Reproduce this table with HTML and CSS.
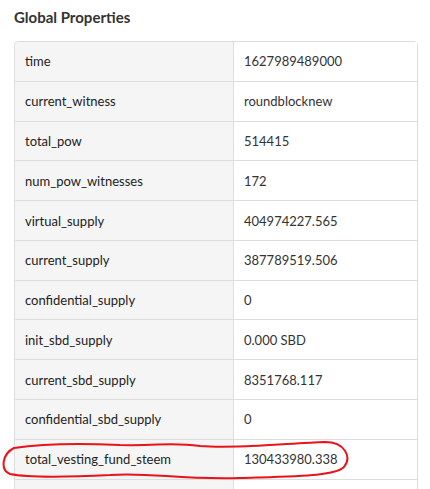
FILE: index.html
```html
<!DOCTYPE html>
<html>
<head>
<meta charset="utf-8">
<link rel="stylesheet" href="styles.css">
</head>
<body>
<div class="page">
  <h3 class="title">Global Properties</h3>
  <div class="table-wrap">
    <table class="props">
      <tbody>
        <tr><td class="key">time</td><td class="val">1627989489000</td></tr>
        <tr><td class="key">current_witness</td><td class="val">roundblocknew</td></tr>
        <tr><td class="key">total_pow</td><td class="val">514415</td></tr>
        <tr><td class="key">num_pow_witnesses</td><td class="val">172</td></tr>
        <tr><td class="key">virtual_supply</td><td class="val">404974227.565</td></tr>
        <tr><td class="key">current_supply</td><td class="val">387789519.506</td></tr>
        <tr><td class="key">confidential_supply</td><td class="val">0</td></tr>
        <tr><td class="key">init_sbd_supply</td><td class="val">0.000 SBD</td></tr>
        <tr><td class="key">current_sbd_supply</td><td class="val">8351768.117</td></tr>
        <tr><td class="key">confidential_sbd_supply</td><td class="val">0</td></tr>
        <tr><td class="key">total_vesting_fund_steem</td><td class="val">130433980.338</td></tr>
        <tr><td class="key">&nbsp;</td><td class="val">&nbsp;</td></tr>
      </tbody>
    </table>
    <svg class="annotation" width="360" height="50" viewBox="0 0 360 50" xmlns="http://www.w3.org/2000/svg">
      <path d="M 14 9 C 40 5, 80 4, 120 6 C 160 7, 170 3, 200 7 C 240 10, 290 4, 325 3 C 345 3, 352 18, 344 28 C 335 37, 300 37, 240 39 C 180 41, 150 33, 110 36 C 70 38, 30 39, 10 35 C 0 31, 2 15, 14 9 Z" fill="none" stroke="#e8131b" stroke-width="2" stroke-linejoin="round"/>
    </svg>
  </div>
</div>
</body>
</html>
```

FILE: styles.css
```css
html, body {
  margin: 0;
  padding: 0;
  background: #ffffff;
}

.page {
  padding: 0 12px 0 14px;
  font-family: Lato, "Liberation Sans", sans-serif;
  color: #333333;
}

.title {
  margin: 0;
  padding-top: 7px;
  height: 41px;
  box-sizing: border-box;
  font-size: 15px;
  font-weight: 700;
  line-height: 20px;
  color: #333333;
}

.table-wrap {
  position: relative;
}

.props {
  width: 404px;
  border-collapse: separate;
  border-spacing: 0;
  border: 1px solid #dddddd;
  border-radius: 4px;
  font-size: 13px;
  line-height: 20px;
}

.props td {
  padding: 9.4px 10px;
  border-top: 1px solid #dddddd;
  vertical-align: middle;
}

.props tr:first-child td {
  border-top: none;
}

.props .key {
  width: 198px;
  background: #f5f5f5;
  color: #222222;
  border-right: 1px solid #dddddd;
}

.props tr:first-child .key {
  border-top-left-radius: 4px;
}

.props .val {
  background: #ffffff;
  color: #333333;
}

.annotation {
  position: absolute;
  left: -14px;
  top: 398px;
  pointer-events: none;
}
```
